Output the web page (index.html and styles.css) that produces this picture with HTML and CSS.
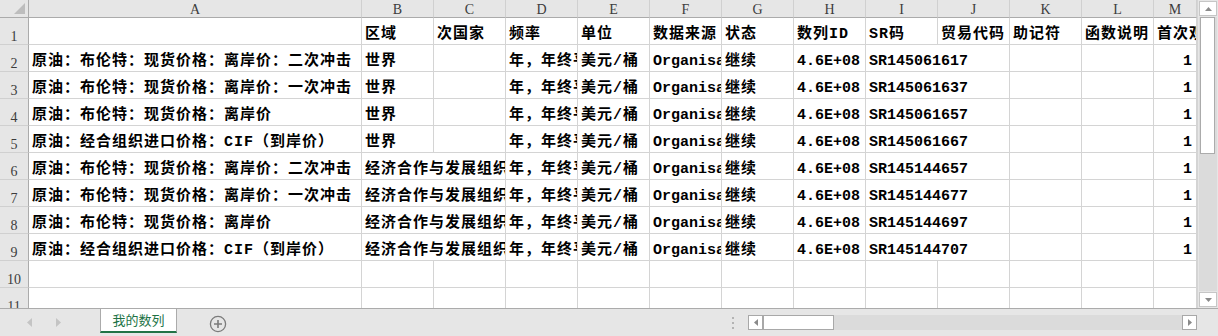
FILE: index.html
```html
<!DOCTYPE html>
<html lang="zh">
<head>
<meta charset="utf-8">
<title>我的数列</title>
<link rel="stylesheet" href="styles.css">
</head>
<body>
<div class="app">
  <div class="main">
    <div class="sheet">
      <div class="grid">
        <div class="corner"><svg width="11" height="11" viewBox="0 0 11 11"><polygon points="11,0 11,11 0,11" fill="#bdbdbd"/></svg></div>
        <div class="ch">A</div><div class="ch">B</div><div class="ch">C</div><div class="ch">D</div><div class="ch">E</div><div class="ch">F</div><div class="ch">G</div><div class="ch">H</div><div class="ch">I</div><div class="ch">J</div><div class="ch">K</div><div class="ch">L</div><div class="ch">M</div>

        <div class="rh">1</div>
        <div class="c"></div><div class="c">区域</div><div class="c">次国家</div><div class="c">频率</div><div class="c">单位</div><div class="c">数据来源</div><div class="c">状态</div><div class="c">数列ID</div><div class="c">SR码</div><div class="c">贸易代码</div><div class="c">助记符</div><div class="c">函数说明</div><div class="c">首次观测日期</div>

        <div class="rh">2</div>
        <div class="c">原油：布伦特：现货价格：离岸价：二次冲击</div><div class="c">世界</div><div class="c"></div><div class="c">年，年终平均</div><div class="c">美元/桶</div><div class="c lat">Organisation</div><div class="c">继续</div><div class="c lat">4.6E+08</div><div class="c lat span2">SR145061617</div><div class="c"></div><div class="c"></div><div class="c lat r">1</div>

        <div class="rh">3</div>
        <div class="c">原油：布伦特：现货价格：离岸价：一次冲击</div><div class="c">世界</div><div class="c"></div><div class="c">年，年终平均</div><div class="c">美元/桶</div><div class="c lat">Organisation</div><div class="c">继续</div><div class="c lat">4.6E+08</div><div class="c lat span2">SR145061637</div><div class="c"></div><div class="c"></div><div class="c lat r">1</div>

        <div class="rh">4</div>
        <div class="c">原油：布伦特：现货价格：离岸价</div><div class="c">世界</div><div class="c"></div><div class="c">年，年终平均</div><div class="c">美元/桶</div><div class="c lat">Organisation</div><div class="c">继续</div><div class="c lat">4.6E+08</div><div class="c lat span2">SR145061657</div><div class="c"></div><div class="c"></div><div class="c lat r">1</div>

        <div class="rh">5</div>
        <div class="c">原油：经合组织进口价格：CIF（到岸价）</div><div class="c">世界</div><div class="c"></div><div class="c">年，年终平均</div><div class="c">美元/桶</div><div class="c lat">Organisation</div><div class="c">继续</div><div class="c lat">4.6E+08</div><div class="c lat span2">SR145061667</div><div class="c"></div><div class="c"></div><div class="c lat r">1</div>

        <div class="rh">6</div>
        <div class="c">原油：布伦特：现货价格：离岸价：二次冲击</div><div class="c span2">经济合作与发展组织</div><div class="c">年，年终平均</div><div class="c">美元/桶</div><div class="c lat">Organisation</div><div class="c">继续</div><div class="c lat">4.6E+08</div><div class="c lat span2">SR145144657</div><div class="c"></div><div class="c"></div><div class="c lat r">1</div>

        <div class="rh">7</div>
        <div class="c">原油：布伦特：现货价格：离岸价：一次冲击</div><div class="c span2">经济合作与发展组织</div><div class="c">年，年终平均</div><div class="c">美元/桶</div><div class="c lat">Organisation</div><div class="c">继续</div><div class="c lat">4.6E+08</div><div class="c lat span2">SR145144677</div><div class="c"></div><div class="c"></div><div class="c lat r">1</div>

        <div class="rh">8</div>
        <div class="c">原油：布伦特：现货价格：离岸价</div><div class="c span2">经济合作与发展组织</div><div class="c">年，年终平均</div><div class="c">美元/桶</div><div class="c lat">Organisation</div><div class="c">继续</div><div class="c lat">4.6E+08</div><div class="c lat span2">SR145144697</div><div class="c"></div><div class="c"></div><div class="c lat r">1</div>

        <div class="rh">9</div>
        <div class="c">原油：经合组织进口价格：CIF（到岸价）</div><div class="c span2">经济合作与发展组织</div><div class="c">年，年终平均</div><div class="c">美元/桶</div><div class="c lat">Organisation</div><div class="c">继续</div><div class="c lat">4.6E+08</div><div class="c lat span2">SR145144707</div><div class="c"></div><div class="c"></div><div class="c lat r">1</div>

        <div class="rh">10</div>
        <div class="c"></div><div class="c"></div><div class="c"></div><div class="c"></div><div class="c"></div><div class="c"></div><div class="c"></div><div class="c"></div><div class="c"></div><div class="c"></div><div class="c"></div><div class="c"></div><div class="c"></div>

        <div class="rh">11</div>
        <div class="c"></div><div class="c"></div><div class="c"></div><div class="c"></div><div class="c"></div><div class="c"></div><div class="c"></div><div class="c"></div><div class="c"></div><div class="c"></div><div class="c"></div><div class="c"></div><div class="c"></div>
      </div>
    </div>
    <div class="vscroll">
      <div class="vbtn"><svg width="7" height="4" viewBox="0 0 7 4"><polygon points="0,4 7,4 3.5,0" fill="#8a8a8a"/></svg></div>
      <div class="vtrack"><div class="vthumb"></div></div>
      <div class="vbtn"><svg width="7" height="4" viewBox="0 0 7 4"><polygon points="0,0 7,0 3.5,4" fill="#8a8a8a"/></svg></div>
    </div>
  </div>
  <div class="tabbar">
    <div class="nav">
      <svg width="5" height="9" viewBox="0 0 5 9"><polygon points="5,0 5,9 0,4.5" fill="#c4c4c4"/></svg>
      <svg width="5" height="9" viewBox="0 0 5 9"><polygon points="0,0 0,9 5,4.5" fill="#c4c4c4"/></svg>
    </div>
    <div class="tab">我的数列</div>
    <div class="add"><svg width="18" height="18" viewBox="0 0 18 18"><circle cx="9" cy="9" r="7.6" fill="none" stroke="#7b7b7b" stroke-width="1.3"/><path d="M9 5 V13 M5 9 H13" stroke="#7b7b7b" stroke-width="1.6"/></svg></div>
    <div class="spacer"></div>
    <div class="dots"><span></span><span></span><span></span></div>
    <div class="hscroll">
      <div class="hbtn"><svg width="4" height="7" viewBox="0 0 4 7"><polygon points="4,0 4,7 0,3.5" fill="#8a8a8a"/></svg></div>
      <div class="hthumb"></div>
      <div class="htrack"></div>
      <div class="hbtn"><svg width="4" height="7" viewBox="0 0 4 7"><polygon points="0,0 0,7 4,3.5" fill="#8a8a8a"/></svg></div>
    </div>
  </div>
</div>
</body>
</html>
```

FILE: styles.css
```css
* { box-sizing: border-box; }
html, body { margin: 0; padding: 0; background: #fff; }
body { width: 1218px; height: 336px; overflow: hidden; }

.app { display: flex; flex-direction: column; width: 1218px; height: 336px; }
.main { display: flex; height: 308px; }

.sheet { width: 1197px; height: 308px; overflow: hidden; }
.grid {
  display: grid;
  grid-template-columns: 29px 333px repeat(11, 72px) 43px;
  grid-template-rows: 18px repeat(11, 27px);
}

.corner, .ch, .rh {
  background: #e6e6e6;
  color: #3c3c3c;
  font-family: "Liberation Serif", serif;
  font-size: 14px;
}
.corner {
  border-right: 1px solid #ababab;
  border-bottom: 1px solid #ababab;
  display: flex; justify-content: flex-end; align-items: flex-end;
  padding: 0 3px 3px 0;
}
.ch {
  border-right: 1px solid #d0d0d0;
  border-bottom: 1px solid #ababab;
  display: flex; justify-content: center; align-items: flex-end;
  line-height: 14px;
}
.rh {
  border-right: 1px solid #ababab;
  border-bottom: 1px solid #d0d0d0;
  display: flex; justify-content: center; align-items: flex-end;
  line-height: 14px;
}

.c {
  border-right: 1px solid #d4d4d4;
  border-bottom: 1px solid #d4d4d4;
  display: flex; align-items: flex-end;
  padding: 0 3px 1px 3px;
  overflow: hidden;
  white-space: nowrap;
  font-family: "Liberation Mono", "Noto Sans CJK SC", monospace;
  font-size: 15px;
  font-weight: 700;
  line-height: 16px;
  letter-spacing: 1px;
  color: #000;
}
.c.lat { letter-spacing: 0; }
.c.r { justify-content: flex-end; padding-right: 4px; }
.span2 { grid-column: span 2; }

.vscroll {
  width: 21px; height: 308px;
  background: #e6e6e6;
  border-left: 1px solid #d4d4d4;
  display: flex; flex-direction: column;
  padding: 1px 1px 1px 1px;
  gap: 1px;
}
.vbtn {
  height: 15px; background: #fff; border: 1px solid #c6c6c6;
  display: flex; align-items: center; justify-content: center;
}
.vtrack { flex: 1; background: #dbdbdb; padding: 0 2px 0 1px; }
.vthumb { height: 137px; background: #fff; border: 1px solid #ababab; }

.tabbar {
  height: 28px;
  background: #e6e6e6;
  border-top: 1px solid #ababab;
  display: flex; align-items: flex-start;
}
.nav { width: 100px; height: 27px; display: flex; align-items: center; padding-left: 27px; gap: 24px; }
.tab {
  width: 77px; height: 24px;
  background: #fff;
  border-left: 1px solid #ababab;
  border-right: 1px solid #ababab;
  border-bottom: 2px solid #217346;
  color: #217346;
  font-family: "Noto Sans CJK SC", sans-serif;
  font-size: 13px;
  line-height: 21px;
  text-align: center;
}
.add { margin-left: 32px; height: 27px; display: flex; align-items: center; padding-top: 2px; }
.spacer { flex: 1; }
.dots { width: 2px; height: 27px; display: flex; flex-direction: column; justify-content: center; gap: 3px; margin-right: 14px; padding-top: 1px; }
.dots span { display: block; width: 2px; height: 2px; background: #b3b3b3; }
.hscroll { width: 449px; height: 15px; margin: 6px 21px 0 0; display: flex; background: #dbdbdb; }
.hbtn { width: 15px; height: 15px; background: #fff; border: 1px solid #a8a8a8; display: flex; align-items: center; justify-content: center; }
.hthumb { width: 71px; height: 15px; background: #fff; border: 1px solid #a8a8a8; }
.htrack { flex: 1; }
```
